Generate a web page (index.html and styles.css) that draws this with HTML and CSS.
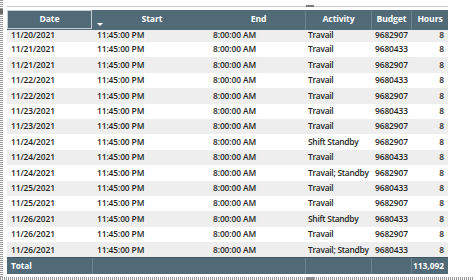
FILE: index.html
```html
<!DOCTYPE html>
<html>
<head>
<meta charset="utf-8">
<link rel="stylesheet" href="styles.css">
</head>
<body>
<div class="frame">
  <div class="main">
    <div class="rail-left"><span class="grip-v"></span></div>
    <div class="content">
      <div class="topline"><span class="grip-h"></span></div>
      <div class="table">
        <div class="row head">
          <div class="c date focus">Date</div>
          <div class="c start"><span class="lbl">Start</span><span class="sort"></span></div>
          <div class="c end">End</div>
          <div class="c act div">Activity</div>
          <div class="c bud div">Budget</div>
          <div class="c hrs div">Hours</div>
        </div>
        <div class="row alt first"><div class="c date">11/20/2021</div><div class="c start">11:45:00 PM</div><div class="c end">8:00:00 AM</div><div class="c act">Travail</div><div class="c bud">9682907</div><div class="c hrs">8</div></div>
        <div class="row"><div class="c date">11/21/2021</div><div class="c start">11:45:00 PM</div><div class="c end">8:00:00 AM</div><div class="c act">Travail</div><div class="c bud">9680433</div><div class="c hrs">8</div></div>
        <div class="row alt"><div class="c date">11/21/2021</div><div class="c start">11:45:00 PM</div><div class="c end">8:00:00 AM</div><div class="c act">Travail</div><div class="c bud">9682907</div><div class="c hrs">8</div></div>
        <div class="row"><div class="c date">11/22/2021</div><div class="c start">11:45:00 PM</div><div class="c end">8:00:00 AM</div><div class="c act">Travail</div><div class="c bud">9680433</div><div class="c hrs">8</div></div>
        <div class="row alt"><div class="c date">11/22/2021</div><div class="c start">11:45:00 PM</div><div class="c end">8:00:00 AM</div><div class="c act">Travail</div><div class="c bud">9682907</div><div class="c hrs">8</div></div>
        <div class="row"><div class="c date">11/23/2021</div><div class="c start">11:45:00 PM</div><div class="c end">8:00:00 AM</div><div class="c act">Travail</div><div class="c bud">9680433</div><div class="c hrs">8</div></div>
        <div class="row alt"><div class="c date">11/23/2021</div><div class="c start">11:45:00 PM</div><div class="c end">8:00:00 AM</div><div class="c act">Travail</div><div class="c bud">9682907</div><div class="c hrs">8</div></div>
        <div class="row"><div class="c date">11/24/2021</div><div class="c start">11:45:00 PM</div><div class="c end">8:00:00 AM</div><div class="c act">Shift Standby</div><div class="c bud">9682907</div><div class="c hrs">8</div></div>
        <div class="row alt"><div class="c date">11/24/2021</div><div class="c start">11:45:00 PM</div><div class="c end">8:00:00 AM</div><div class="c act">Travail</div><div class="c bud">9680433</div><div class="c hrs">8</div></div>
        <div class="row"><div class="c date">11/24/2021</div><div class="c start">11:45:00 PM</div><div class="c end">8:00:00 AM</div><div class="c act">Travail; Standby</div><div class="c bud">9682907</div><div class="c hrs">8</div></div>
        <div class="row alt"><div class="c date">11/25/2021</div><div class="c start">11:45:00 PM</div><div class="c end">8:00:00 AM</div><div class="c act">Travail</div><div class="c bud">9680433</div><div class="c hrs">8</div></div>
        <div class="row"><div class="c date">11/25/2021</div><div class="c start">11:45:00 PM</div><div class="c end">8:00:00 AM</div><div class="c act">Travail</div><div class="c bud">9682907</div><div class="c hrs">8</div></div>
        <div class="row alt"><div class="c date">11/26/2021</div><div class="c start">11:45:00 PM</div><div class="c end">8:00:00 AM</div><div class="c act">Shift Standby</div><div class="c bud">9680433</div><div class="c hrs">8</div></div>
        <div class="row"><div class="c date">11/26/2021</div><div class="c start">11:45:00 PM</div><div class="c end">8:00:00 AM</div><div class="c act">Travail</div><div class="c bud">9682907</div><div class="c hrs">8</div></div>
        <div class="row alt"><div class="c date">11/26/2021</div><div class="c start">11:45:00 PM</div><div class="c end">8:00:00 AM</div><div class="c act">Travail; Standby</div><div class="c bud">9680433</div><div class="c hrs">8</div></div>
        <div class="row total">
          <div class="c date">Total</div>
          <div class="c start div"></div>
          <div class="c end"></div>
          <div class="c act div"></div>
          <div class="c bud div"></div>
          <div class="c hrs div">113,092</div>
        </div>
      </div>
    </div>
  </div>
  <div class="rail-bottom"><span class="grip-b"></span></div>
</div>
</body>
</html>
```
FILE: styles.css
```css
html, body {
  margin: 0;
  padding: 0;
  background: #ffffff;
}
body {
  font-family: "Open Sans", "Noto Sans", sans-serif;
  color: #252423;
}
.frame {
  width: 474px;
  height: 280px;
  display: flex;
  flex-direction: column;
  overflow: hidden;
}
.main {
  display: flex;
  height: 277px;
  flex: none;
}
.rail-left {
  width: 3px;
  flex: none;
  background: repeating-linear-gradient(to bottom, #9a9a9a 0 1px, #ffffff 1px 2px);
  display: flex;
  flex-direction: column;
  padding-top: 9px;
}
.grip-v {
  display: block;
  width: 3px;
  height: 5px;
  background: #6a6a6a;
}
.content {
  flex: 1;
  padding-left: 4px;
  padding-top: 6px;
}
.topline {
  width: 441px;
  height: 1px;
  background: #c9c9c9;
  margin-bottom: 3px;
  display: flex;
}
.grip-h {
  display: block;
  width: 8px;
  height: 2px;
  margin-left: 299px;
  margin-top: -1px;
  background: #7a7a7a;
}
.table {
  width: 441px;
  display: grid;
  grid-template-rows: 20px 12px repeat(14, 15.4px) 17px;
}
.row {
  display: grid;
  grid-template-columns: 85px 120px 93px 66px 40px 37px;
  font-size: 8.4px;
  font-weight: 600;
  background: #ffffff;
  align-items: center;
}
.row.alt {
  background: #eeeeee;
}
.row.first {
  align-items: start;
}
.row.first .c {
  padding-top: 1px;
}
.c {
  white-space: nowrap;
  line-height: 1;
}
.c.date { padding-left: 4px; letter-spacing: -0.1px; }
.c.start { padding-left: 5px; letter-spacing: -0.1px; }
.c.end { text-align: right; padding-right: 49px; letter-spacing: -0.1px; }
.c.act { padding-left: 3px; letter-spacing: -0.25px; }
.c.bud { padding-left: 4px; letter-spacing: -0.1px; }
.c.hrs { text-align: right; padding-right: 4px; }

.row.head {
  background: #506a78;
  color: #ffffff;
  font-weight: 700;
  font-size: 8.6px;
  align-items: stretch;
}
.row.head .c {
  text-align: center;
  padding: 5px 0 0 0;
  box-sizing: border-box;
  letter-spacing: -0.1px;
}
.row.head .c.focus {
  border: 1px solid #c4ced3;
  margin-bottom: 1px;
  padding-top: 4px;
}
.row.head .c.start {
  display: grid;
  grid-template-rows: 8px 3px;
  justify-items: center;
  align-content: start;
}
.sort {
  justify-self: start;
  margin-left: 5px;
  width: 0;
  height: 0;
  border-left: 3px solid transparent;
  border-right: 3px solid transparent;
  border-top: 3px solid #ffffff;
}
.row.head .c.div,
.row.total .c.div {
  border-left: 1px solid #6c8390;
}
.row.total {
  background: #506a78;
  color: #ffffff;
  font-weight: 700;
  align-items: stretch;
  border-top: 1px solid #3f5663;
}
.row.total .c {
  display: flex;
  align-items: center;
}
.row.total .c.hrs {
  justify-content: flex-end;
}
.rail-bottom {
  height: 3px;
  flex: none;
  background: repeating-linear-gradient(to right, #9a9a9a 0 1px, #ffffff 1px 2px);
  display: flex;
}
.grip-b {
  display: block;
  width: 8px;
  height: 3px;
  margin-left: 306px;
  background: #8a8a8a;
}
```
